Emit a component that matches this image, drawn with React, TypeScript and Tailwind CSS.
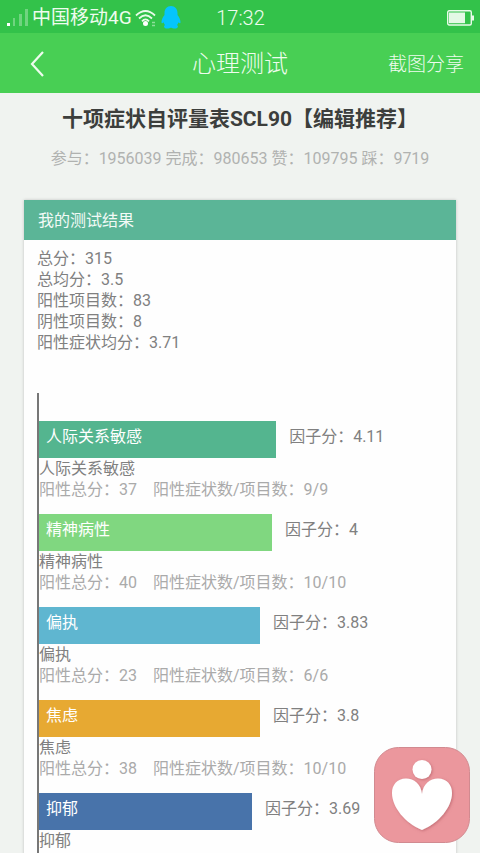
interface Factor {
  name: string;
  score: string;
  width: number;
  color: string;
  total?: number;
  items?: string;
}

const SUMMARY = [
  { label: '总分', value: '315' },
  { label: '总均分', value: '3.5' },
  { label: '阳性项目数', value: '83' },
  { label: '阴性项目数', value: '8' },
  { label: '阳性症状均分', value: '3.71' },
];

const FACTORS: Factor[] = [
  { name: '人际关系敏感', score: '4.11', width: 58.7, color: 'bg-[#54b58f]', total: 37, items: '9/9' },
  { name: '精神病性', score: '4', width: 57.7, color: 'bg-[#80d780]', total: 40, items: '10/10' },
  { name: '偏执', score: '3.83', width: 54.7, color: 'bg-[#5fb6d0]', total: 23, items: '6/6' },
  { name: '焦虑', score: '3.8', width: 54.7, color: 'bg-[#e7a932]', total: 38, items: '10/10' },
  { name: '抑郁', score: '3.69', width: 52.7, color: 'bg-[#4873aa]' },
];

function SignalIcon() {
  return (
    <svg width="22" height="18" viewBox="0 0 22 18" fill="#fff" aria-hidden="true">
      <rect x="0" y="14" width="3" height="3" />
      <rect x="6" y="9" width="2" height="8" opacity="0.3" />
      <rect x="12" y="5" width="3" height="12" opacity="0.3" />
      <rect x="18" y="0" width="3" height="17" opacity="0.3" />
    </svg>
  );
}

function WifiIcon() {
  return (
    <svg width="22" height="18" viewBox="0 0 22 18" fill="none" stroke="#e9fbe9" strokeWidth="1.8" aria-hidden="true">
      <path d="M1 6.5Q10.5 -2.5 20 6.5" />
      <path d="M4 9.5Q10.5 3 17 9.5" />
      <path d="M7 12.3Q10.5 8.5 14 12.3" />
      <circle cx="10.5" cy="14.5" r="2.5" fill="#fff" stroke="none" />
      <path d="M17 13.5h3M17 16.5h3" strokeWidth="1.5" opacity="0.5" />
    </svg>
  );
}

function PenguinIcon() {
  return (
    <svg width="20" height="23" viewBox="0 0 20 23" fill="#05c5fb" aria-hidden="true">
      <path d="M10 0C6 0 3.5 3 3.5 7v2C2 11 .5 13.5 .5 16c0 1.5 .8 1.8 2 .3 .3 1.2 .8 2 1.5 2.7-1.5 .8-1.5 3.5 2 3.5 2 0 3-.3 4-1 1 .7 2 1 4 1 3.5 0 3.5-2.700 2-3.5 .7-.7 1.2-1.5 1.5-2.7 1.2 1.5 2 1.2 2-.3 0-2.5-1.5-5-3-7V7C16.500 3 14 0 10 0z" />
    </svg>
  );
}

function BatteryIcon() {
  return (
    <svg width="27" height="16" viewBox="0 0 27 16" aria-hidden="true">
      <rect x="0.7" y="0.7" width="23.6" height="14.3" rx="1.5" fill="none" stroke="#e9fbe9" strokeWidth="1.4" />
      <rect x="2" y="2.5" width="16" height="10.7" fill="#e4f9e5" />
      <rect x="25" y="5.5" width="2" height="5" fill="#e9fbe9" />
    </svg>
  );
}

function FactorRow({ factor }: { factor: Factor }) {
  return (
    <li className="mb-[14px]">
      <div className="flex">
        <div
          className={`h-[37px] shrink-0 pl-[7px] leading-8 text-white ${factor.color}`}
          style={{ width: `${factor.width}%` }}
        >
          {factor.name}
        </div>
        <span className="pl-[13px] leading-8 whitespace-nowrap">因子分：{factor.score}</span>
      </div>
      <p>{factor.name}</p>
      {factor.items && (
        <p className="flex gap-4 whitespace-nowrap text-[#aaaaaa]">
          <span>阳性总分：{factor.total}</span>
          <span>阳性症状数/项目数：{factor.items}</span>
        </p>
      )}
    </li>
  );
}

export default function App() {
  return (
    <div className="flex h-screen flex-col overflow-hidden bg-[#f0f3f0] font-[Roboto,'Noto_Sans_CJK_SC',sans-serif] text-base leading-[21px] text-[#808080]">
      <div className="grid h-[33px] shrink-0 grid-cols-[1fr_auto_1fr] items-center bg-[#33c24a] pt-[2px] pr-[6px] pl-[7px] text-[#eefcee]">
        <div className="flex items-center">
          <SignalIcon />
          <span className="ml-[3px] text-[19px] whitespace-nowrap">中国移动4G</span>
          <span className="ml-[3px]">
            <WifiIcon />
          </span>
          <span className="ml-1">
            <PenguinIcon />
          </span>
        </div>
        <time className="text-xl font-light">17:32</time>
        <div className="flex justify-end">
          <BatteryIcon />
        </div>
      </div>

      <header className="grid h-[60px] shrink-0 grid-cols-[1fr_auto_1fr] items-center bg-[#48cf54] px-4 pt-[2px] text-[#eefcee]">
        <button type="button" aria-label="返回" className="ml-[14px] justify-self-start">
          <svg width="14" height="26" viewBox="0 0 14 26" fill="none" stroke="currentColor" strokeWidth="2.2" aria-hidden="true">
            <path d="M13 1L2 13L13 25" />
          </svg>
        </button>
        <h1 className="text-2xl font-light">心理测试</h1>
        <button type="button" className="justify-self-end text-[19px] font-light">
          截图分享
        </button>
      </header>

      <main className="flex flex-1 flex-col px-6 pt-3">
        <h2 className="text-center text-[21px] leading-7 font-bold whitespace-nowrap text-[#3c3e3c]">
          十项症状自评量表SCL90【编辑推荐】
        </h2>
        <p className="mt-[15px] text-center whitespace-nowrap text-[#b0b2b0]">
          参与：1956039 完成：980653 赞：109795 踩：9719
        </p>

        <section className="mt-[31px] flex-1 bg-[#fefefe] shadow-[0_0_3px_rgba(0,0,0,0.2)]">
          <h3 className="bg-[#5bb597] pt-px pl-[14px] leading-[39px] text-[#f2faf6]">我的测试结果</h3>
          <div className="px-[13px] pt-2">
            {SUMMARY.map((row) => (
              <p key={row.label}>
                {row.label}：{row.value}
              </p>
            ))}
            <ul className="mt-10 border-l-2 border-[#777777] pt-7 pb-6">
              {FACTORS.map((factor) => (
                <FactorRow key={factor.name} factor={factor} />
              ))}
            </ul>
          </div>
        </section>
      </main>

      <button type="button" aria-label="心理咨询" className="fixed right-[10px] bottom-[10px]">
        <svg width="96" height="96" viewBox="0 0 96 96" aria-hidden="true">
          <defs>
            <filter id="soft" x="-20%" y="-20%" width="140%" height="140%">
              <feDropShadow dx="1" dy="1" stdDeviation="1.5" floodColor="#a9525c" floodOpacity="0.6" />
            </filter>
          </defs>
          <rect x="0.5" y="0.5" width="95" height="95" rx="24" fill="#eb979d" stroke="#d18a90" />
          <g fill="#fff" filter="url(#soft)">
            <circle cx="48" cy="22.5" r="9.5" />
            <path d="M48 47C47 37 40 31.500 32 31.500C23 31.500 18 38 18 46C18 60 31 76 48 83C65 76 78 60 78 46C78 38 73 31.500 64 31.500C56 31.500 49 37 48 47Z" />
          </g>
        </svg>
      </button>
    </div>
  );
}
